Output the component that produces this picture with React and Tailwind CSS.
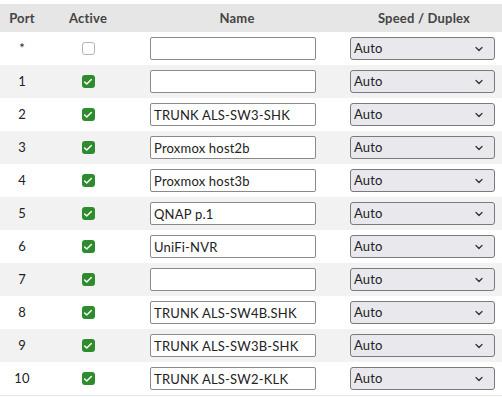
import { ChevronDown, Check } from "lucide-react"

const rows = [
  { port: "*", active: false, name: "" },
  { port: "1", active: true, name: "" },
  { port: "2", active: true, name: "TRUNK ALS-SW3-SHK" },
  { port: "3", active: true, name: "Proxmox host2b" },
  { port: "4", active: true, name: "Proxmox host3b" },
  { port: "5", active: true, name: "QNAP p.1" },
  { port: "6", active: true, name: "UniFi-NVR" },
  { port: "7", active: true, name: "" },
  { port: "8", active: true, name: "TRUNK ALS-SW4B.SHK" },
  { port: "9", active: true, name: "TRUNK ALS-SW3B-SHK" },
  { port: "10", active: true, name: "TRUNK ALS-SW2-KLK" },
]

const cols = "grid grid-cols-[44px_88px_202px_1fr] items-center"

const App = () => {
  return (
    <div className="w-[502px] h-[397px] bg-white pt-[4px] text-[13px] tracking-[0.2px] text-[#222] font-['Lato','Liberation_Sans',sans-serif]">
      <div className={`${cols} h-[28px] pt-[2px] bg-[#e6e6e6] font-bold text-[#444]`}>
        <div className="text-center">Port</div>
        <div className="text-center">Active</div>
        <div className="text-center pl-[8px]">Name</div>
        <div className="text-center pl-[18px] pr-[6px]">Speed / Duplex</div>
      </div>

      {rows.map((r, i) => (
        <div key={r.port} className={`${cols} h-[33px] ${i % 2 === 1 ? "bg-[#f2f2f2]" : "bg-white"}`}>
          <div className="text-center">{r.port}</div>
          <div className="flex justify-center">
            {r.active ? (
              <div className="w-[13px] h-[13px] rounded-[3px] bg-[#2e8b2e] flex items-center justify-center">
                <Check size={10} strokeWidth={3.5} color="white" />
              </div>
            ) : (
              <div className="w-[13px] h-[13px] rounded-[3px] border border-[#b5b5b5] bg-white" />
            )}
          </div>
          <div className="pl-[18px]">
            <input
              type="text"
              defaultValue={r.name}
              className="w-[166px] h-[23px] border border-[#8a8a8a] rounded-[2px] bg-white px-[3px] text-[13px] tracking-[0.2px] outline-none"
            />
          </div>
          <div className="pl-[16px]">
            <div className="w-[145px] h-[23px] border border-[#7a7a7a] rounded-[3px] bg-[#e9e9ed] flex items-center justify-between pl-[3px] pr-[9px]">
              <span>Auto</span>
              <ChevronDown size={12} strokeWidth={2.5} color="#333" />
            </div>
          </div>
        </div>
      ))}
      <div className="h-px bg-[#e6e6e6]" />
    </div>
  )
}

export default App
